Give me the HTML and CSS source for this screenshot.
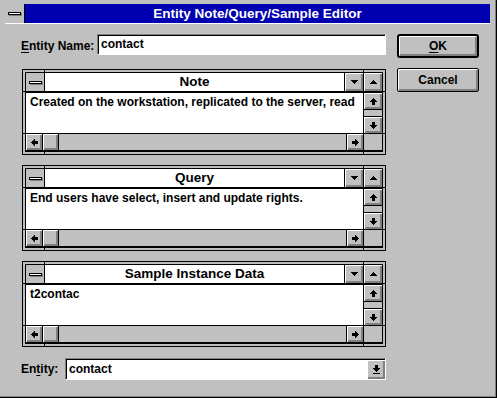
FILE: index.html
```html
<!DOCTYPE html>
<html lang="en">
<head>
  <meta charset="UTF-8">
  <title>Entity Note/Query/Sample Editor</title>
  <link rel="stylesheet" href="styles.css">
</head>
<body>
  <div class="window">
    <div class="titlebar">
      <div class="sysbox"><span class="sysbar"></span></div>
      <div class="title">Entity Note/Query/Sample Editor</div>
    </div>

    <div class="dialog">
      <div class="left">
        <div class="name-row">
          <label class="label name-label"><u>E</u>ntity Name:</label>
          <div class="field">contact</div>
        </div>

        <!-- Note -->
        <div class="panel">
          <div class="child">
            <div class="caption">
              <div class="sysbox small"><span class="sysbar"></span></div>
              <div class="caption-title">Note</div>
              <div class="capbtn"><svg width="7" height="4" viewBox="0 0 7 4"><path d="M0 0h7v1H6v1H5v1H4v1H3V3H2V2H1V1H0z"/></svg></div>
              <div class="capbtn"><svg width="7" height="4" viewBox="0 0 7 4" class="flip"><path d="M0 0h7v1H6v1H5v1H4v1H3V3H2V2H1V1H0z"/></svg></div>
            </div>
            <div class="client">
              <div class="text">Created on the workstation, replicated to the server, read</div>
              <div class="vscroll">
                <div class="sbtn up"><svg width="7" height="7" viewBox="0 0 7 7"><path d="M3 0h1v1h1v1h1v1h1v1H5v3H2V4H0V3h1V2h1V1h1z"/></svg></div>
                <div class="track"></div>
                <div class="sbtn down"><svg width="7" height="7" viewBox="0 0 7 7" class="rot180"><path d="M3 0h1v1h1v1h1v1h1v1H5v3H2V4H0V3h1V2h1V1h1z"/></svg></div>
              </div>
              <div class="hscroll">
                <div class="sbtn left"><svg width="7" height="7" viewBox="0 0 7 7" class="rot270"><path d="M3 0h1v1h1v1h1v1h1v1H5v3H2V4H0V3h1V2h1V1h1z"/></svg></div>
                <div class="thumb"></div>
                <div class="track"></div>
                <div class="sbtn right"><svg width="7" height="7" viewBox="0 0 7 7" class="rot90"><path d="M3 0h1v1h1v1h1v1h1v1H5v3H2V4H0V3h1V2h1V1h1z"/></svg></div>
              </div>
              <div class="corner"></div>
            </div>
          </div>
        </div>

        <!-- Query -->
        <div class="panel">
          <div class="child">
            <div class="caption">
              <div class="sysbox small"><span class="sysbar"></span></div>
              <div class="caption-title">Query</div>
              <div class="capbtn"><svg width="7" height="4" viewBox="0 0 7 4"><path d="M0 0h7v1H6v1H5v1H4v1H3V3H2V2H1V1H0z"/></svg></div>
              <div class="capbtn"><svg width="7" height="4" viewBox="0 0 7 4" class="flip"><path d="M0 0h7v1H6v1H5v1H4v1H3V3H2V2H1V1H0z"/></svg></div>
            </div>
            <div class="client">
              <div class="text">End users have select, insert and update rights.</div>
              <div class="vscroll">
                <div class="sbtn up"><svg width="7" height="7" viewBox="0 0 7 7"><path d="M3 0h1v1h1v1h1v1h1v1H5v3H2V4H0V3h1V2h1V1h1z"/></svg></div>
                <div class="track"></div>
                <div class="sbtn down"><svg width="7" height="7" viewBox="0 0 7 7" class="rot180"><path d="M3 0h1v1h1v1h1v1h1v1H5v3H2V4H0V3h1V2h1V1h1z"/></svg></div>
              </div>
              <div class="hscroll">
                <div class="sbtn left"><svg width="7" height="7" viewBox="0 0 7 7" class="rot270"><path d="M3 0h1v1h1v1h1v1h1v1H5v3H2V4H0V3h1V2h1V1h1z"/></svg></div>
                <div class="thumb"></div>
                <div class="track"></div>
                <div class="sbtn right"><svg width="7" height="7" viewBox="0 0 7 7" class="rot90"><path d="M3 0h1v1h1v1h1v1h1v1H5v3H2V4H0V3h1V2h1V1h1z"/></svg></div>
              </div>
              <div class="corner"></div>
            </div>
          </div>
        </div>

        <!-- Sample Instance Data -->
        <div class="panel">
          <div class="child">
            <div class="caption">
              <div class="sysbox small"><span class="sysbar"></span></div>
              <div class="caption-title">Sample Instance Data</div>
              <div class="capbtn"><svg width="7" height="4" viewBox="0 0 7 4"><path d="M0 0h7v1H6v1H5v1H4v1H3V3H2V2H1V1H0z"/></svg></div>
              <div class="capbtn"><svg width="7" height="4" viewBox="0 0 7 4" class="flip"><path d="M0 0h7v1H6v1H5v1H4v1H3V3H2V2H1V1H0z"/></svg></div>
            </div>
            <div class="client">
              <div class="text">t2contac</div>
              <div class="vscroll">
                <div class="sbtn up"><svg width="7" height="7" viewBox="0 0 7 7"><path d="M3 0h1v1h1v1h1v1h1v1H5v3H2V4H0V3h1V2h1V1h1z"/></svg></div>
                <div class="track"></div>
                <div class="sbtn down"><svg width="7" height="7" viewBox="0 0 7 7" class="rot180"><path d="M3 0h1v1h1v1h1v1h1v1H5v3H2V4H0V3h1V2h1V1h1z"/></svg></div>
              </div>
              <div class="hscroll">
                <div class="sbtn left"><svg width="7" height="7" viewBox="0 0 7 7" class="rot270"><path d="M3 0h1v1h1v1h1v1h1v1H5v3H2V4H0V3h1V2h1V1h1z"/></svg></div>
                <div class="thumb"></div>
                <div class="track"></div>
                <div class="sbtn right"><svg width="7" height="7" viewBox="0 0 7 7" class="rot90"><path d="M3 0h1v1h1v1h1v1h1v1H5v3H2V4H0V3h1V2h1V1h1z"/></svg></div>
              </div>
              <div class="corner"></div>
            </div>
          </div>
        </div>

        <div class="entity-row">
          <label class="label entity-label">En<u>t</u>ity:</label>
          <div class="combo">
            <span class="combo-text">contact</span>
            <span class="combo-btn"><svg width="7" height="9" viewBox="0 0 7 9"><path d="M2 0h3v3h2v1H6v1H5v1H4v1H3V6H2V5H1V4H0V3h2zM0 8h7v1H0z"/></svg></span>
          </div>
        </div>
      </div>

      <div class="buttons">
        <button class="btn default"><u>O</u>K</button>
        <button class="btn">Cancel</button>
      </div>
    </div>
  </div>
</body>
</html>
```

FILE: styles.css
```css
body {
  margin: 0;
  background-color: #c0c0c0;
  font-family: "Liberation Sans", Arial, sans-serif;
  font-weight: bold;
  font-size: 12px;
  line-height: 14px;
  color: #000;
}

svg {
  display: block;
  shape-rendering: crispEdges;
}

.flip, .rot180 {
  transform: rotate(180deg);
}

.rot90 {
  transform: rotate(90deg);
}

.rot270 {
  transform: rotate(270deg);
}

.window {
  width: 497px;
  height: 398px;
  box-sizing: border-box;
  padding: 4px 6px 0 5px;
  border-right: 1px solid #000;
  border-bottom: 1px solid #000;
  box-shadow: inset -1px -1px #808080;
  background-color: #c0c0c0;
}

/* barra de titulo */
.titlebar {
  display: flex;
  height: 19px;
  border-bottom: 1px solid #fff;
}

.sysbox {
  width: 19px;
  border-right: 1px solid #000;
  background-color: #c0c0c0;
  display: flex;
  align-items: center;
  justify-content: center;
}

.sysbox.small {
  width: 18px;
}

.sysbar {
  width: 11px;
  height: 1px;
  background-color: #fff;
  border: 1px solid #000;
  box-shadow: 1px 1px #808080;
}

.title {
  flex: 1;
  background-color: #0000b0;
  color: #fff;
  text-align: center;
  font-size: 13.5px;
  line-height: 19px;
}

.dialog {
  display: flex;
  gap: 11px;
  padding: 10px 0 0 16px;
}

.left {
  width: 365px;
}

.label u {
  text-decoration-thickness: 1px;
  text-underline-offset: 2px;
}

.name-row {
  display: flex;
  height: 21px;
}

.name-label {
  width: 76px;
  margin-top: 5px;
}

.field {
  width: 289px;
  height: 21px;
  box-sizing: border-box;
  padding: 2px 3px 0;
  border: 1px solid;
  border-color: #808080 #fff #fff #808080;
  box-shadow: inset 1px 1px #000;
  background-color: #fff;
}

/* janelas filhas */
.panel {
  width: 364px;
  box-sizing: border-box;
  margin: 10px 0 0 1px;
  border: 1px solid #000;
  padding: 2px;
  background:
    linear-gradient(#000, #000) 21px 0 / 1px 100% no-repeat,
    linear-gradient(#000, #000) calc(100% - 21px) 0 / 1px 100% no-repeat,
    linear-gradient(#000, #000) 0 21px / 100% 1px no-repeat,
    linear-gradient(#000, #000) 0 calc(100% - 20px) / 100% 1px no-repeat,
    #c0c0c0;
}

.name-row + .panel {
  margin-top: 14px;
}

.child {
  border: 1px solid #000;
  background-color: #c0c0c0;
}

.caption {
  display: flex;
  height: 18px;
  border-bottom: 1px solid #000;
}

.caption-title {
  flex: 1;
  background-color: #fff;
  text-align: center;
  font-size: 13.5px;
  line-height: 18px;
}

.capbtn {
  width: 18px;
  border-left: 1px solid #000;
  display: flex;
  align-items: center;
  justify-content: center;
  box-shadow: inset 1px 1px #fff, inset -2px -2px #808080;
}

.client {
  display: grid;
  grid-template-columns: 1fr 18px;
  grid-template-rows: 41px 17px;
  border-top: 1px solid #000;
}

.text {
  background-color: #fff;
  border-right: 1px solid #000;
  border-bottom: 1px solid #000;
  padding: 2px 4px 0;
  white-space: nowrap;
  overflow: hidden;
}

.vscroll {
  display: flex;
  flex-direction: column;
  border-bottom: 1px solid #000;
}

.hscroll {
  display: flex;
  border-right: 1px solid #000;
  border-bottom: 1px solid #000;
}

.corner {
  border-bottom: 1px solid #000;
}

.track {
  flex: 1;
}

.sbtn {
  display: flex;
  align-items: center;
  justify-content: center;
  box-shadow: inset 1px 1px #fff, inset -2px -2px #808080;
}

.sbtn.up {
  height: 16px;
  border-bottom: 1px solid #000;
}

.sbtn.down {
  height: 16px;
  border-top: 1px solid #000;
}

.sbtn.left {
  width: 16px;
  border-right: 1px solid #000;
}

.sbtn.right {
  width: 16px;
  border-left: 1px solid #000;
}

.thumb {
  width: 15px;
  border-right: 1px solid #000;
  box-shadow: inset 1px 1px #fff, inset -2px -2px #808080;
}

/* combo Entity */
.entity-row {
  display: flex;
  height: 22px;
  margin-top: 11px;
}

.entity-label {
  width: 44px;
  margin-top: 4px;
}

.combo {
  width: 321px;
  height: 22px;
  box-sizing: border-box;
  display: flex;
  border: 1px solid;
  border-color: #808080 #fff #fff #808080;
  box-shadow: inset 1px 1px #000;
  background-color: #fff;
}

.combo-text {
  flex: 1;
  padding: 3px 3px 0;
}

.combo-btn {
  width: 18px;
  height: 19px;
  margin-top: 1px;
  box-sizing: border-box;
  background-color: #c0c0c0;
  display: flex;
  align-items: center;
  justify-content: center;
  box-shadow: inset 1px 1px #fff, inset -2px -2px #808080;
}

/* botoes */
.buttons {
  display: flex;
  flex-direction: column;
  gap: 10px;
  width: 82px;
}

.btn {
  height: 24px;
  padding: 0;
  font: inherit;
  color: #000;
  background-color: #c0c0c0;
  border: 1px solid #000;
  border-radius: 2px;
  box-shadow: inset 1px 1px #fff, inset -2px -2px #808080;
}

.btn.default {
  border-width: 2px;
  border-radius: 3px;
}

.btn u {
  text-underline-offset: 2px;
}
```
